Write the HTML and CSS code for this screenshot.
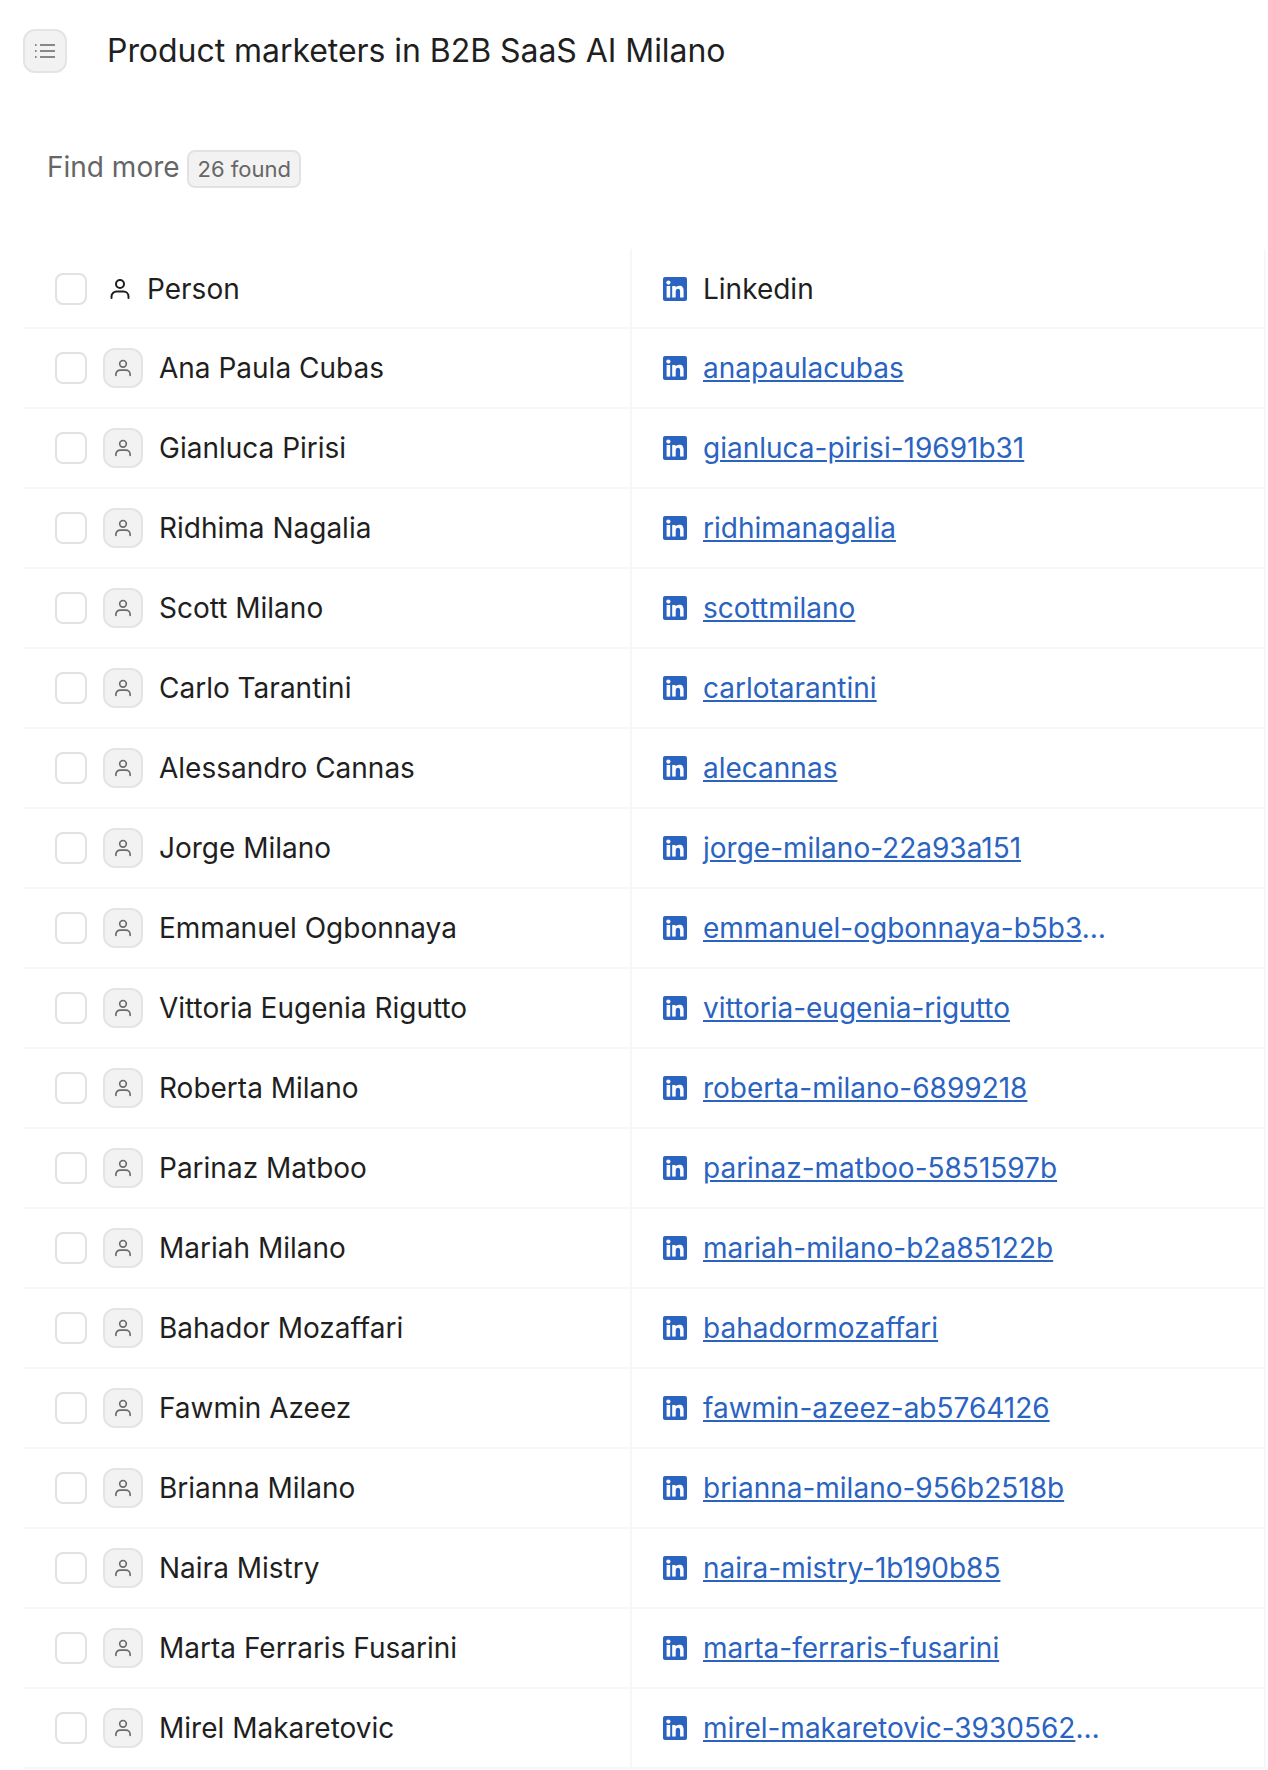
FILE: index.html
```html
<!DOCTYPE html>
<html lang="en">
<head>
  <meta charset="UTF-8">
  <title>Product marketers in B2B SaaS AI Milano</title>
  <link rel="stylesheet" href="styles.css">
</head>
<body>
  <svg class="defs" width="0" height="0">
    <symbol id="person" viewBox="0 0 24 24">
      <circle cx="12" cy="7" r="4" fill="none" stroke="currentColor" stroke-width="2"/>
      <path d="M3.5 21v-1.5a5 5 0 0 1 5-5h7a5 5 0 0 1 5 5V21" fill="none" stroke="currentColor" stroke-width="2" stroke-linecap="round"/>
    </symbol>
    <symbol id="linkedin" viewBox="0 0 24 24">
      <rect width="24" height="24" rx="2" fill="#2a63c0"/>
      <circle cx="5.4" cy="5.6" r="2.1" fill="#fff"/>
      <rect x="3.6" y="9" width="3.6" height="11.6" fill="#fff"/>
      <path d="M9.2 9h3.4v1.6c.6-1 1.9-1.9 3.7-1.9 3.4 0 4.3 2.1 4.3 5.1v6.8h-3.5v-5.9c0-1.5-.4-2.9-2-2.9-1.7 0-2.4 1.3-2.4 3v5.8H9.2z" fill="#fff"/>
    </symbol>
  </svg>

  <header class="topbar">
    <button class="menuBtn">
      <svg width="22" height="16" viewBox="0 0 22 16">
        <path d="M6 2h15M6 8h15M6 14h15" stroke="#666" stroke-width="1.6" fill="none"/>
        <path d="M1 2h1.6M1 8h1.6M1 14h1.6" stroke="#666" stroke-width="1.6" fill="none"/>
      </svg>
    </button>
    <h1>Product marketers in B2B SaaS AI Milano</h1>
  </header>

  <div class="findMore">
    <span class="findLabel">Find more</span>
    <span class="badge">26 found</span>
  </div>

  <div class="table">
    <div class="row head">
      <div class="cell">
        <span class="check"></span>
        <svg class="headIcon"><use href="#person"/></svg>
        <span>Person</span>
      </div>
      <div class="cell">
        <svg class="liIcon"><use href="#linkedin"/></svg>
        <span>Linkedin</span>
      </div>
    </div>
    <div class="row">
      <div class="cell"><span class="check"></span><span class="avatar"><svg><use href="#person"/></svg></span><span>Ana Paula Cubas</span></div>
      <div class="cell"><svg class="liIcon"><use href="#linkedin"/></svg><div class="linkWrap"><a href="#">anapaulacubas</a></div></div>
    </div>
    <div class="row">
      <div class="cell"><span class="check"></span><span class="avatar"><svg><use href="#person"/></svg></span><span>Gianluca Pirisi</span></div>
      <div class="cell"><svg class="liIcon"><use href="#linkedin"/></svg><div class="linkWrap"><a href="#">gianluca-pirisi-19691b31</a></div></div>
    </div>
    <div class="row">
      <div class="cell"><span class="check"></span><span class="avatar"><svg><use href="#person"/></svg></span><span>Ridhima Nagalia</span></div>
      <div class="cell"><svg class="liIcon"><use href="#linkedin"/></svg><div class="linkWrap"><a href="#">ridhimanagalia</a></div></div>
    </div>
    <div class="row">
      <div class="cell"><span class="check"></span><span class="avatar"><svg><use href="#person"/></svg></span><span>Scott Milano</span></div>
      <div class="cell"><svg class="liIcon"><use href="#linkedin"/></svg><div class="linkWrap"><a href="#">scottmilano</a></div></div>
    </div>
    <div class="row">
      <div class="cell"><span class="check"></span><span class="avatar"><svg><use href="#person"/></svg></span><span>Carlo Tarantini</span></div>
      <div class="cell"><svg class="liIcon"><use href="#linkedin"/></svg><div class="linkWrap"><a href="#">carlotarantini</a></div></div>
    </div>
    <div class="row">
      <div class="cell"><span class="check"></span><span class="avatar"><svg><use href="#person"/></svg></span><span>Alessandro Cannas</span></div>
      <div class="cell"><svg class="liIcon"><use href="#linkedin"/></svg><div class="linkWrap"><a href="#">alecannas</a></div></div>
    </div>
    <div class="row">
      <div class="cell"><span class="check"></span><span class="avatar"><svg><use href="#person"/></svg></span><span>Jorge Milano</span></div>
      <div class="cell"><svg class="liIcon"><use href="#linkedin"/></svg><div class="linkWrap"><a href="#">jorge-milano-22a93a151</a></div></div>
    </div>
    <div class="row">
      <div class="cell"><span class="check"></span><span class="avatar"><svg><use href="#person"/></svg></span><span>Emmanuel Ogbonnaya</span></div>
      <div class="cell"><svg class="liIcon"><use href="#linkedin"/></svg><div class="linkWrap"><a href="#">emmanuel-ogbonnaya-b5b3</a>…</div></div>
    </div>
    <div class="row">
      <div class="cell"><span class="check"></span><span class="avatar"><svg><use href="#person"/></svg></span><span>Vittoria Eugenia Rigutto</span></div>
      <div class="cell"><svg class="liIcon"><use href="#linkedin"/></svg><div class="linkWrap"><a href="#">vittoria-eugenia-rigutto</a></div></div>
    </div>
    <div class="row">
      <div class="cell"><span class="check"></span><span class="avatar"><svg><use href="#person"/></svg></span><span>Roberta Milano</span></div>
      <div class="cell"><svg class="liIcon"><use href="#linkedin"/></svg><div class="linkWrap"><a href="#">roberta-milano-6899218</a></div></div>
    </div>
    <div class="row">
      <div class="cell"><span class="check"></span><span class="avatar"><svg><use href="#person"/></svg></span><span>Parinaz Matboo</span></div>
      <div class="cell"><svg class="liIcon"><use href="#linkedin"/></svg><div class="linkWrap"><a href="#">parinaz-matboo-5851597b</a></div></div>
    </div>
    <div class="row">
      <div class="cell"><span class="check"></span><span class="avatar"><svg><use href="#person"/></svg></span><span>Mariah Milano</span></div>
      <div class="cell"><svg class="liIcon"><use href="#linkedin"/></svg><div class="linkWrap"><a href="#">mariah-milano-b2a85122b</a></div></div>
    </div>
    <div class="row">
      <div class="cell"><span class="check"></span><span class="avatar"><svg><use href="#person"/></svg></span><span>Bahador Mozaffari</span></div>
      <div class="cell"><svg class="liIcon"><use href="#linkedin"/></svg><div class="linkWrap"><a href="#">bahadormozaffari</a></div></div>
    </div>
    <div class="row">
      <div class="cell"><span class="check"></span><span class="avatar"><svg><use href="#person"/></svg></span><span>Fawmin Azeez</span></div>
      <div class="cell"><svg class="liIcon"><use href="#linkedin"/></svg><div class="linkWrap"><a href="#">fawmin-azeez-ab5764126</a></div></div>
    </div>
    <div class="row">
      <div class="cell"><span class="check"></span><span class="avatar"><svg><use href="#person"/></svg></span><span>Brianna Milano</span></div>
      <div class="cell"><svg class="liIcon"><use href="#linkedin"/></svg><div class="linkWrap"><a href="#">brianna-milano-956b2518b</a></div></div>
    </div>
    <div class="row">
      <div class="cell"><span class="check"></span><span class="avatar"><svg><use href="#person"/></svg></span><span>Naira Mistry</span></div>
      <div class="cell"><svg class="liIcon"><use href="#linkedin"/></svg><div class="linkWrap"><a href="#">naira-mistry-1b190b85</a></div></div>
    </div>
    <div class="row">
      <div class="cell"><span class="check"></span><span class="avatar"><svg><use href="#person"/></svg></span><span>Marta Ferraris Fusarini</span></div>
      <div class="cell"><svg class="liIcon"><use href="#linkedin"/></svg><div class="linkWrap"><a href="#">marta-ferraris-fusarini</a></div></div>
    </div>
    <div class="row">
      <div class="cell"><span class="check"></span><span class="avatar"><svg><use href="#person"/></svg></span><span>Mirel Makaretovic</span></div>
      <div class="cell"><svg class="liIcon"><use href="#linkedin"/></svg><div class="linkWrap"><a href="#">mirel-makaretovic-3930562</a>…</div></div>
    </div>
  </div>
</body>
</html>
```

FILE: styles.css
```css
html, body {
  margin: 0;
  padding: 0;
  background: #fff;
}
body {
  font-family: Inter, "Noto Sans", sans-serif;
  color: #1f1f1f;
  overflow: hidden;
}
.defs {
  display: block;
  height: 0;
}

.topbar {
  display: flex;
  align-items: center;
  height: 44px;
  padding: 29px 0 0 23px;
}
.menuBtn {
  display: flex;
  align-items: center;
  justify-content: center;
  box-sizing: border-box;
  width: 44px;
  height: 44px;
  padding: 0;
  background: #f2f2f2;
  border: 2px solid #e4e4e4;
  border-radius: 12px;
}
.topbar h1 {
  margin: 0 0 0 40px;
  font-size: 32px;
  font-weight: 400;
  line-height: 44px;
  letter-spacing: -0.05px;
  white-space: nowrap;
}

.findMore {
  display: flex;
  align-items: center;
  gap: 7px;
  height: 38px;
  margin: 77px 0 0 47px;
  font-size: 28px;
  color: #666;
}
.findLabel {
  margin-bottom: 4px;
}
.badge {
  box-sizing: border-box;
  height: 38px;
  padding: 0 8px 0 9px;
  font-size: 22px;
  line-height: 34px;
  background: #f2f2f2;
  border: 2px solid #e2e2e2;
  border-radius: 8px;
}

.table {
  box-sizing: border-box;
  width: 1243px;
  margin: 61px 0 0 23px;
  border-right: 2px solid #f7f7f7;
}
.row {
  display: grid;
  grid-template-columns: 609px 1fr;
  height: 80px;
  box-sizing: border-box;
  border-bottom: 2px solid #f7f7f7;
  font-size: 28px;
}
.head .cell {
  padding-top: 2px;
}
.cell {
  display: flex;
  align-items: center;
  min-width: 0;
  white-space: nowrap;
}
.cell:first-child {
  padding-left: 32px;
  border-right: 2px solid #f7f7f7;
}
.cell:last-child {
  padding-left: 31px;
}
.check {
  flex: none;
  box-sizing: border-box;
  width: 32px;
  height: 32px;
  margin-right: 16px;
  background: #fff;
  border: 2px solid #e2e2e2;
  border-radius: 8px;
}
.headIcon {
  flex: none;
  width: 24px;
  height: 24px;
  margin: 0 15px 0 5px;
  color: #1f1f1f;
}
.avatar {
  flex: none;
  display: flex;
  align-items: center;
  justify-content: center;
  box-sizing: border-box;
  width: 40px;
  height: 40px;
  margin-right: 16px;
  color: #6b6b6b;
  background: #f2f2f2;
  border: 2px solid #e4e4e4;
  border-radius: 12px;
}
.avatar svg {
  width: 20px;
  height: 20px;
}
.liIcon {
  flex: none;
  width: 24px;
  height: 24px;
  margin-right: 16px;
}
.linkWrap {
  color: #2a63c0;
}
.linkWrap a {
  color: #2a63c0;
  text-decoration: underline;
}
```
